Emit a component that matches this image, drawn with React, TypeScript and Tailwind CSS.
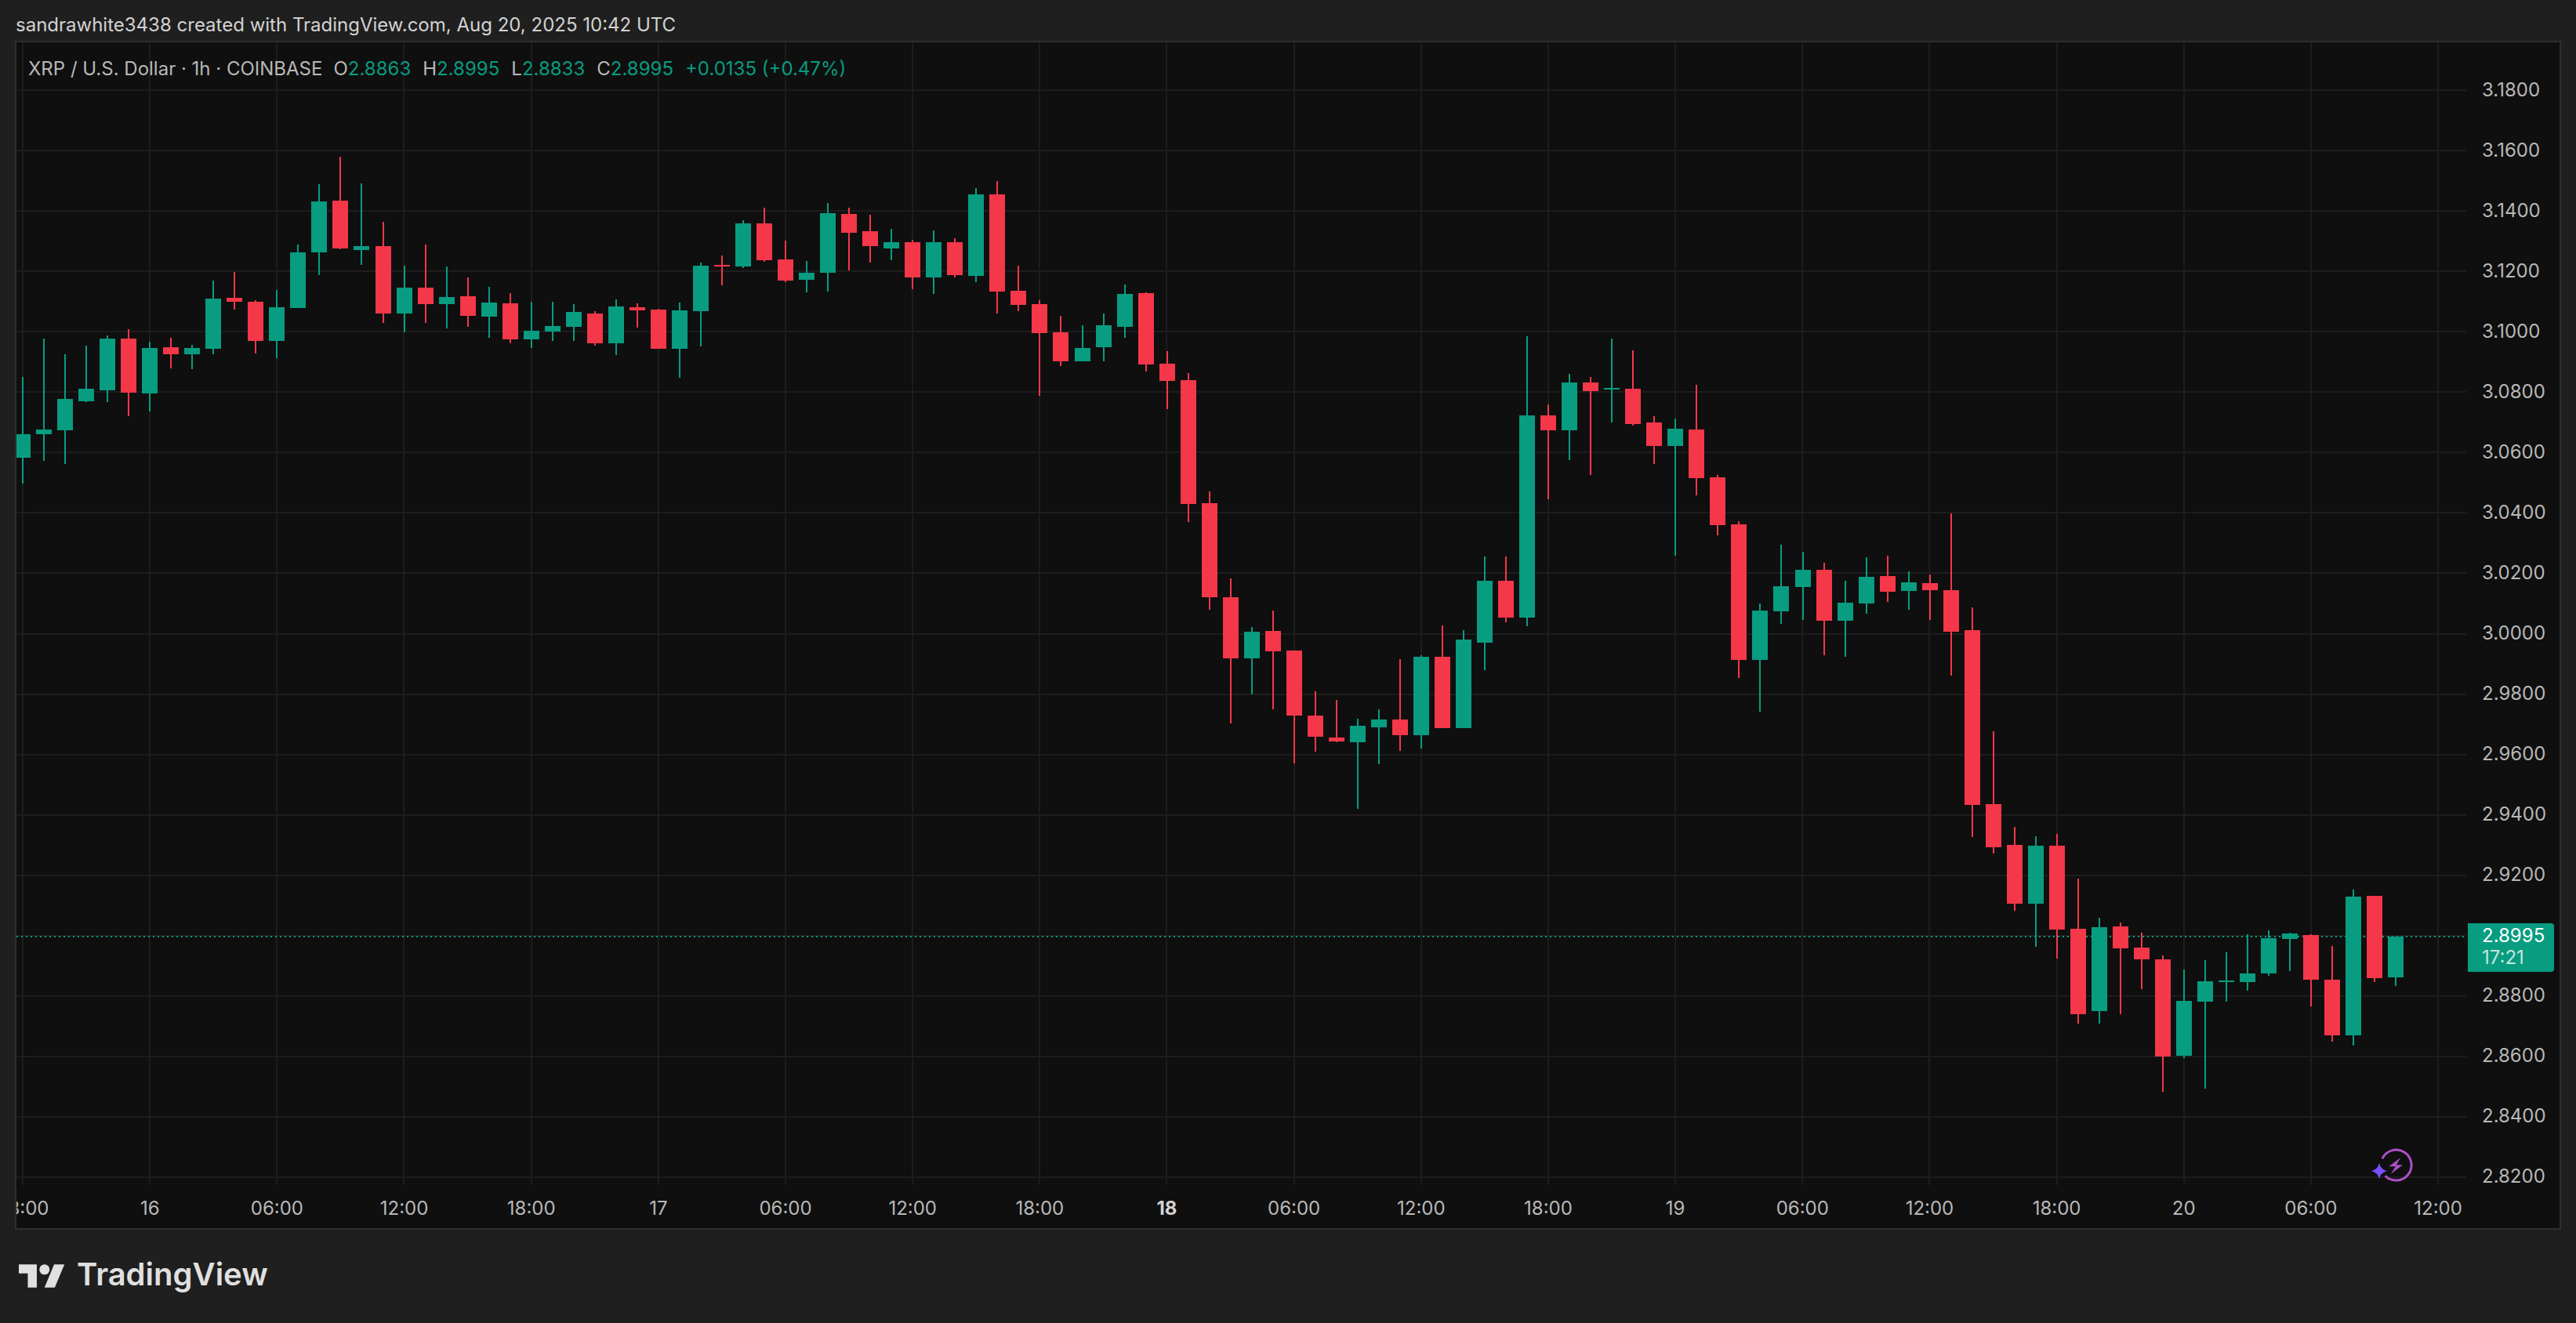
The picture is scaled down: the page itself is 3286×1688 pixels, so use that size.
import React from 'react';

type Candle = ['g' | 'r', number, number, number, number];

const UP = '#089c81';
const DOWN = '#f43749';

// [colour, wick top, body top, body bottom, wick bottom], measured per block then scaled to page px
const scale = (y0: number, k: number, rows: Candle[]): Candle[] =>
  rows.map(([c, a, b, d, e]) => [c, y0 + a / k, y0 + b / k, y0 + d / k, y0 + e / k]);

const candles: Candle[] = [
  ...scale(180, 3, [
    ['g', 903, 1122, 1212, 1311], ['g', 756, 1104, 1122, 1224], ['g', 816, 987, 1107, 1236], ['g', 783, 948, 996, 999],
    ['g', 744, 756, 954, 999], ['r', 720, 756, 963, 1053], ['g', 768, 792, 966, 1035], ['r', 753, 789, 816, 870],
    ['g', 780, 792, 816, 873], ['g', 534, 603, 795, 816], ['r', 501, 600, 615, 645], ['r', 609, 615, 765, 813],
    ['g', 570, 636, 765, 831], ['g', 396, 426, 639, 639], ['g', 165, 231, 426, 513], ['r', 60, 228, 411, 414],
    ['g', 162, 402, 417, 474], ['r', 309, 402, 660, 696], ['g', 477, 561, 660, 732], ['r', 396, 561, 624, 696],
    ['g', 480, 597, 624, 717], ['r', 522, 594, 669, 711], ['g', 558, 618, 672, 753], ['r', 582, 621, 759, 774],
    ['g', 615, 726, 759, 792], ['g', 615, 708, 729, 765], ['g', 624, 654, 711, 765], ['r', 651, 660, 774, 783],
    ['g', 606, 633, 774, 819], ['r', 621, 636, 648, 714], ['r', 642, 645, 795, 795], ['g', 618, 648, 795, 906],
    ['g', 465, 477, 651, 786], ['r', 438, 474, 480, 552], ['g', 303, 315, 480, 486], ['r', 255, 315, 456, 462],
    ['r', 381, 453, 534, 540], ['g', 459, 504, 531, 579], ['g', 237, 276, 504, 576], ['r', 255, 279, 351, 495],
    ['r', 282, 345, 402, 465], ['g', 336, 387, 411, 456], ['r', 378, 387, 522, 567], ['g', 342, 387, 522, 585],
    ['r', 372, 387, 513, 522], ['g', 180, 204, 516, 540], ['r', 153, 204, 576, 660], ['r', 477, 573, 627, 651],
    ['r', 609, 624, 735, 975], ['r', 669, 732, 843, 861], ['g', 705, 792, 843, 843], ['g', 660, 705, 789, 843],
    ['g', 549, 585, 711, 753], ['r', 579, 582, 855, 882], ['r', 804, 852, 918, 1026],
  ]),
  ...scale(380, 2.306, [
    ['r', 221, 242, 606, 659], ['r', 570, 604, 881, 918], ['r', 826, 881, 1061, 1252], ['g', 968, 982, 1061, 1167],
    ['r', 920, 980, 1040, 1211], ['r', 1038, 1038, 1229, 1370], ['r', 1158, 1229, 1291, 1335], ['r', 1183, 1294, 1305, 1307],
    ['g', 1238, 1259, 1307, 1503], ['g', 1211, 1241, 1264, 1372], ['r', 1063, 1241, 1287, 1333], ['g', 1051, 1056, 1287, 1326],
    ['r', 964, 1056, 1266, 1266], ['g', 978, 1005, 1266, 1266], ['g', 761, 832, 1015, 1095], ['r', 761, 832, 941, 955],
    ['g', 113, 346, 941, 966], ['r', 314, 346, 390, 593], ['g', 224, 249, 390, 477], ['r', 233, 249, 274, 521],
    ['g', 120, 265, 270, 367], ['r', 154, 267, 371, 376], ['r', 348, 367, 436, 489], ['g', 355, 385, 436, 759],
    ['r', 256, 387, 530, 581], ['r', 521, 528, 669, 699],
  ]),
  ...scale(400, 2.8, [
    ['r', 742, 753, 1238, 1302], ['g', 1036, 1061, 1238, 1422], ['g', 826, 974, 1064, 1109], ['g', 851, 916, 977, 1095],
    ['r', 890, 916, 1098, 1221], ['g', 955, 1033, 1098, 1226], ['g', 871, 941, 1036, 1072], ['r', 865, 938, 994, 1030],
    ['g', 921, 960, 991, 1058], ['r', 932, 963, 988, 1095], ['r', 714, 988, 1137, 1294],
  ]),
  ['r', 775, 804, 1027, 1068],
  ...scale(780, 2.529, [
    ['r', 387, 622, 761, 781], ['r', 695, 754, 943, 966], ['g', 726, 756, 943, 1082], ['r', 718, 756, 1027, 1120],
    ['r', 862, 1024, 1300, 1330], ['g', 989, 1019, 1290, 1330], ['r', 1004, 1017, 1087, 1300], ['r', 1037, 1085, 1123, 1219],
    ['r', 1110, 1123, 1436, 1550], ['g', 1156, 1257, 1434, 1442], ['g', 1125, 1194, 1259, 1540], ['g', 1100, 1191, 1196, 1259],
    ['g', 1042, 1168, 1196, 1224], ['g', 1029, 1055, 1168, 1176], ['g', 1037, 1039, 1057, 1161], ['r', 1042, 1044, 1189, 1275],
    ['r', 1080, 1189, 1368, 1388], ['g', 898, 921, 1368, 1401], ['r', 918, 918, 1184, 1196], ['g', 1050, 1050, 1181, 1209],
  ]),
];

const prices = ['3.1800', '3.1600', '3.1400', '3.1200', '3.1000', '3.0800', '3.0600', '3.0400', '3.0200', '3.0000', '2.9800', '2.9600', '2.9400', '2.9200', '2.9000', '2.8800', '2.8600', '2.8400', '2.8200'];
const times = ['18:00', '16', '06:00', '12:00', '18:00', '17', '06:00', '12:00', '18:00', '18', '06:00', '12:00', '18:00', '19', '06:00', '12:00', '18:00', '20', '06:00', '12:00'];

const ohlc = [
  ['O', '2.8863'],
  ['H', '2.8995'],
  ['L', '2.8833'],
  ['C', '2.8995'],
];

const ChartCanvas = () => (
  <svg viewBox="21 54 3125 1458" className="block w-[3125px] h-[1458px]" shapeRendering="crispEdges">
    {times.map((_, k) => (
      <rect key={k} x={Math.round(28 + 162.16 * k)} y={54} width={2} height={1458} fill="#1d1d1d" />
    ))}
    {prices.map((_, k) => (
      <rect key={k} x={21} y={Math.round(114 + 77.06 * k)} width={3125} height={2} fill="#1d1d1d" />
    ))}
    <line x1={21} y1={1195} x2={3146} y2={1195} stroke={UP} strokeWidth={2} strokeDasharray="2 4" />
    {candles.map(([c, wt, bt, bb, wb], i) => {
      const cx = 29 + 27.03 * i;
      const fill = c === 'g' ? UP : DOWN;
      return (
        <g key={i} fill={fill}>
          <rect x={Math.round(cx - 1)} y={Math.round(wt)} width={2} height={Math.round(wb - wt)} />
          <rect x={Math.round(cx - 10)} y={Math.round(bt)} width={20} height={Math.max(2, Math.round(bb - bt))} />
        </g>
      );
    })}
    <g shapeRendering="auto">
      <path d="M3038.9 1478.3A19.5 19.5 0 1 1 3042.6 1500.2" fill="none" stroke="#ae4fc6" strokeWidth="3" />
      <path d="M3062.3 1477 L3047.3 1488.3 L3055.7 1488.3 L3050 1497.7 L3065 1486.3 L3056.7 1486.3 Z" fill="#ae4fc6" />
      <path d="M3035 1484 Q3037 1492 3045 1494 Q3037 1496 3035 1504 Q3033 1496 3025 1494 Q3033 1492 3035 1484 Z" fill="#7a4dff" />
    </g>
  </svg>
);

const App: React.FC = () => {
  return (
    <div className="w-[3286px] h-[1688px] flex flex-col bg-[#1f1f1f] font-['Inter',sans-serif] overflow-hidden">
      {/* Snapshot caption */}
      <div className="h-[52px] pl-[20px] pt-[12px] flex items-center text-[24px] text-[#d2d2d2] whitespace-nowrap">
        sandrawhite3438 created with TradingView.com, Aug 20, 2025 10:42 UTC
      </div>

      {/* Chart panel */}
      <div className="relative ml-[19px] w-[3248px] h-[1517px] border-2 border-[#2e2e2e] bg-[#0f0f0f] grid grid-cols-[3125px_119px] grid-rows-[1458px_55px] overflow-hidden">
        <ChartCanvas />

        <div className="pt-[22px] text-[24px] text-[#b8b8b8]">
          {prices.map(p => (
            <div key={p} className="h-[77.06px] flex items-center pl-[20px]">{p}</div>
          ))}
        </div>

        <div className="flex overflow-hidden text-[24px] text-[#b8b8b8] pt-[4px]">
          {times.map((t, k) => (
            <div
              key={k}
              className={`shrink-0 w-[162.16px] flex items-center justify-center ${k === 0 ? '-ml-[73px] pl-[5px]' : ''} ${k === 9 ? 'font-bold text-[#d2d2d2]' : ''}`}
            >
              {t}
            </div>
          ))}
        </div>
        <div />

        {/* Symbol legend */}
        <div className="absolute left-[15px] top-[16px] flex items-center text-[24px] text-[#b8b8b8] whitespace-nowrap">
          <span className="mr-[14px]">XRP / U.S. Dollar · 1h · COINBASE</span>
          {ohlc.map(([k, v]) => (
            <span key={k} className="mr-[15px]">
              {k}<span className="text-[#089c81]">{v}</span>
            </span>
          ))}
          <span className="text-[#089c81]">+0.0135 (+0.47%)</span>
        </div>

        {/* Last price tag */}
        <div className="absolute left-[3127px] top-[1124px] w-[110px] h-[62px] rounded-r-[4px] bg-[#089c81] pl-[18px] pb-[2px] flex flex-col justify-center text-[24px] leading-[28px]">
          <span className="text-white">2.8995</span>
          <span className="text-[#c3e6df]">17:21</span>
        </div>
      </div>

      {/* Logo */}
      <div className="flex-1 pl-[24px] pt-[32px] flex items-start gap-[15px]">
        <svg viewBox="0 4 36 18" className="w-[59px] h-[30px] mt-[12px]" fill="#e0e0e0">
          <path d="M14 22H7V11H0V4h14v18zM28 22h-8l7.5-18h8L28 22z" />
          <circle cx="20" cy="8" r="4" />
        </svg>
        <span className="text-[40px] leading-[50px] font-semibold text-[#e0e0e0]">TradingView</span>
      </div>
    </div>
  );
};

export default App;
